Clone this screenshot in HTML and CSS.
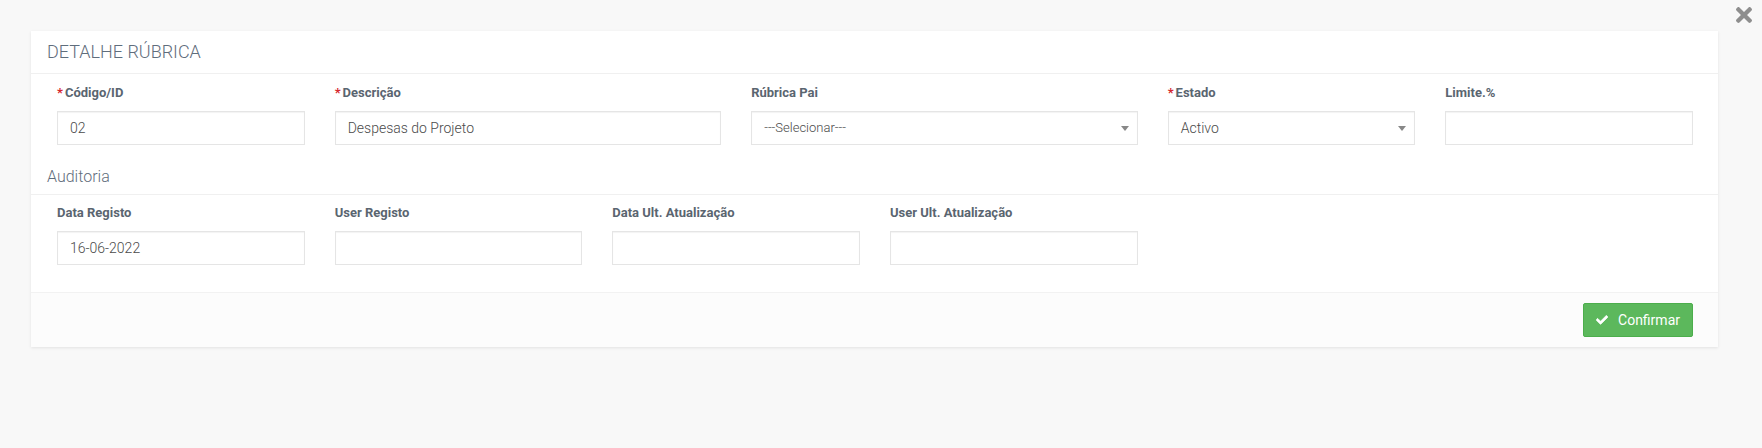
FILE: index.html
```html
<!DOCTYPE html>
<html lang="pt">
<head>
<meta charset="utf-8">
<title>Detalhe Rúbrica</title>
<link rel="stylesheet" href="styles.css">
</head>
<body>
<div class="page">
  <button class="close" type="button" aria-label="Fechar">
    <svg viewBox="0 80 352 352" width="16" height="16"><path d="M242.72 256l100.07-100.07c12.28-12.28 12.28-32.19 0-44.48l-22.24-22.240c-12.28-12.28-32.19-12.28-44.48 0L176 189.28 75.93 89.21c-12.28-12.28-32.19-12.28-44.48 0L9.21 111.45c-12.28 12.28-12.28 32.19 0 44.480L109.28 256 9.21 356.07c-12.28 12.28-12.28 32.19 0 44.48l22.24 22.24c12.28 12.28 32.2 12.28 44.48 0L176 322.72l100.07 100.07c12.28 12.28 32.2 12.28 44.48 0l22.24-22.24c12.28-12.28 12.28-32.19 0-44.48L242.72 256z" fill="currentColor"/></svg>
  </button>
  <div class="card">
    <div class="card-head">DETALHE RÚBRICA</div>
    <div class="section first">
      <div class="row">
        <div class="col c2">
          <label class="lbl"><span class="req">*</span>Código/ID</label>
          <div class="field">02</div>
        </div>
        <div class="col c3">
          <label class="lbl"><span class="req">*</span>Descrição</label>
          <div class="field">Despesas do Projeto</div>
        </div>
        <div class="col c3">
          <label class="lbl">Rúbrica Pai</label>
          <div class="field select sm">---Selecionar---<span class="caret"></span></div>
        </div>
        <div class="col c2">
          <label class="lbl"><span class="req">*</span>Estado</label>
          <div class="field select">Activo<span class="caret"></span></div>
        </div>
        <div class="col c2">
          <label class="lbl">Limite.%</label>
          <div class="field"></div>
        </div>
      </div>
    </div>
    <div class="sub-head">Auditoria</div>
    <div class="section second">
      <div class="row">
        <div class="col c2">
          <label class="lbl">Data Registo</label>
          <div class="field">16-06-2022</div>
        </div>
        <div class="col c2">
          <label class="lbl">User Registo</label>
          <div class="field"></div>
        </div>
        <div class="col c2">
          <label class="lbl">Data Ult. Atualização</label>
          <div class="field"></div>
        </div>
        <div class="col c2">
          <label class="lbl">User Ult. Atualização</label>
          <div class="field"></div>
        </div>
      </div>
    </div>
    <div class="card-foot">
      <button class="btn-ok" type="button">
        <svg viewBox="0 40 512 440"><path d="M173.898 439.404l-166.4-166.4c-9.997-9.997-9.997-26.206 0-36.204l36.203-36.204c9.997-9.998 26.207-9.998 36.204 0L192 312.69 432.095 72.596c9.997-9.997 26.207-9.997 36.204 0l36.203 36.204c9.997 9.997 9.997 26.206 0 36.204l-294.4 294.401c-9.998 9.997-26.207 9.997-36.204-.001z" fill="currentColor" stroke="currentColor" stroke-width="30" stroke-linejoin="round"/></svg>
        <span>Confirmar</span>
      </button>
    </div>
  </div>
</div>
</body>
</html>
```
FILE: styles.css
```css
* { box-sizing: border-box; }
html, body { margin: 0; padding: 0; }
body {
  background: #f8f8f8;
  font-family: Roboto, "Liberation Sans", Arial, sans-serif;
  color: #555;
  width: 1762px;
  height: 448px;
  overflow: hidden;
}
.page {
  position: relative;
  padding: 31px 44px 0 31px;
}
.close {
  position: absolute;
  top: 7px;
  right: 10px;
  width: 16px;
  height: 16px;
  padding: 0;
  border: 0;
  background: none;
  color: #8e8e8e;
  display: flex;
}
.card {
  background: #fff;
  box-shadow: 0 1px 3px rgba(0, 0, 0, 0.09);
}
.card-head {
  height: 43px;
  line-height: 42px;
  padding-left: 16px;
  font-size: 18px;
  font-weight: 300;
  color: #5f6d7c;
  border-bottom: 1px solid #f0f0f0;
}
.section { padding: 0 10px 0 11px; }
.section.first { padding-top: 10px; padding-bottom: 22px; }
.section.second { padding-top: 9px; padding-bottom: 27px; }
.row { display: flex; }
.col { padding: 0 15px; }
.c2 { width: 16.6667%; }
.c3 { width: 25%; }
.lbl {
  display: block;
  font-size: 13px;
  line-height: 18px;
  font-weight: 700;
  color: #5a6570;
  margin-bottom: 9px;
  white-space: nowrap;
}
.req {
  color: #d6272e;
  margin-right: 2px;
}
.field {
  position: relative;
  height: 34px;
  border: 1px solid #e5e5e5;
  box-shadow: inset 0 1px 1px rgba(0, 0, 0, 0.05);
  background: #fff;
  padding: 0 12px;
  font-size: 14px;
  font-weight: 300;
  line-height: 32px;
  color: #4a4a4a;
  white-space: nowrap;
}
.field.sm { font-size: 13px; }
.caret {
  position: absolute;
  right: 8px;
  top: 14px;
  width: 0;
  height: 0;
  border-left: 4px solid transparent;
  border-right: 4px solid transparent;
  border-top: 5px solid #888;
}
.sub-head {
  padding: 0 16px 7px;
  font-size: 16px;
  font-weight: 300;
  line-height: 20px;
  color: #5f6d7c;
  border-bottom: 1px solid #f0f0f0;
}
.card-foot {
  border-top: 1px solid #f2f2f2;
  background: #fcfcfc;
  padding: 10px 25px 10px;
  display: flex;
  justify-content: flex-end;
}
.btn-ok {
  height: 34px;
  display: flex;
  align-items: center;
  gap: 10px;
  padding: 0 12px 0 12px;
  background: #5cb85c;
  border: 1px solid #4cae4c;
  border-radius: 2px;
  color: #fff;
  font-family: Roboto, "Liberation Sans", Arial, sans-serif;
  font-size: 14px;
  font-weight: 400;
}
.btn-ok svg { display: block; width: 12px; height: 10px; }
```
